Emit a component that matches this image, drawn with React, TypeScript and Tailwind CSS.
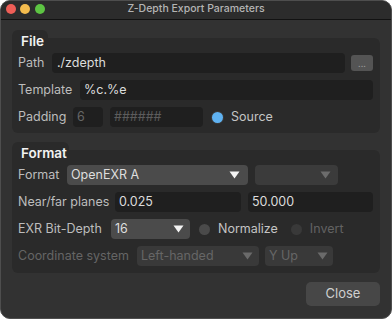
import React from "react";

const Arrow = ({ color }: { color: string }) => (
  <svg width="11" height="8" viewBox="0 0 11 8" className="shrink-0">
    <path d="M0.5 0.5 L10.5 0.5 L5.5 7.5 Z" fill={color} />
  </svg>
);

const Row = ({ children }: { children: React.ReactNode }) => (
  <div className="flex items-center h-[20px] gap-[6px] whitespace-nowrap [&>*]:shrink-0">{children}</div>
);

export default function App() {
  return (
    <div className="w-[392px] h-[319px] bg-white font-['Inter',sans-serif] text-[12.5px]">
      <div className="h-full rounded-[10px] border border-[#4e4e4e] bg-[#323232] overflow-hidden flex flex-col">
        {/* title bar */}
        <div className="h-[19px] shrink-0 bg-[#2c2c2c] border-b border-[#121212] flex items-start">
          <div className="flex gap-[4.5px] pl-[4.5px] pt-[3px] w-[60px]">
            <div className="size-[10px] rounded-full bg-[#ee5e57]" />
            <div className="size-[10px] rounded-full bg-[#f4bc4e]" />
            <div className="size-[10px] rounded-full bg-[#5dc443]" />
          </div>
          <div className="flex-1 text-center text-[10.5px] leading-[16px] font-medium text-[#b4b4b4]">
            Z-Depth Export Parameters
          </div>
          <div className="w-[60px]" />
        </div>

        <div className="flex flex-col px-[11px] pt-[10px]">
          {/* File group */}
          <div className="flex flex-col">
            <div className="w-[36px] h-[8px] bg-[#2a2a2a] rounded-t-[6px]" />
            <div className="bg-[#2a2a2a] rounded-b-[6px] rounded-tr-[6px] px-[6px] pb-[6px] flex flex-col gap-[7px]">
              <div className="-mt-[5px] h-[16px] leading-[16px] text-[13.5px] font-semibold text-[#f2f2f2] pl-[3px] -mb-[3px]">
                File
              </div>
              <Row>
                <div className="w-[28px] text-[#bdbdbd]">Path</div>
                <div className="w-[293px] h-[20px] rounded-[4px] bg-[#1f1f1f] pl-[5px] leading-[20px] text-[#dcdcdc]">
                  ./zdepth
                </div>
                <div className="w-[22px] h-[16px] rounded-[3px] bg-[#545454] flex items-end justify-center pb-[3px] text-[#9a9a9a] text-[9px] leading-[8px]">
                  ...
                </div>
              </Row>
              <Row>
                <div className="w-[56px] text-[#bdbdbd]">Template</div>
                <div className="w-[293px] h-[20px] rounded-[4px] bg-[#1f1f1f] pl-[4px] leading-[20px] text-[#dcdcdc]">
                  %c.%e
                </div>
              </Row>
              <Row>
                <div className="w-[49px] text-[#bdbdbd]">Padding</div>
                <div className="w-[30px] h-[20px] rounded-[4px] bg-[#1f1f1f] pl-[4px] leading-[20px] text-[#666666]">
                  6
                </div>
                <div className="w-[93px] h-[20px] rounded-[4px] bg-[#1f1f1f] pl-[4px] leading-[20px] text-[#5c5c5c] ml-[1px]">
                  ######
                </div>
                <div className="size-[11px] rounded-full bg-[#5fb2f2] ml-[3px] ring-1 ring-[#3a3a3a]" />
                <div className="text-[#c4c4c4] ml-[2px]">Source</div>
              </Row>
            </div>
          </div>

          {/* Format group */}
          <div className="flex flex-col mt-[9px]">
            <div className="w-[57px] h-[8px] bg-[#2a2a2a] rounded-t-[6px]" />
            <div className="bg-[#2a2a2a] rounded-b-[6px] rounded-tr-[6px] px-[6px] pb-[7px] flex flex-col gap-[7px]">
              <div className="-mt-[5px] h-[16px] leading-[16px] text-[13.5px] font-semibold text-[#f2f2f2] pl-[3px] -mb-[3px]">
                Format
              </div>
              <Row>
                <div className="w-[43px] text-[#bdbdbd]">Format</div>
                <div className="w-[181px] h-[20px] rounded-[4px] bg-[#4b4b4b] pl-[4px] pr-[8px] flex items-center justify-between text-[#dedede]">
                  <span>OpenEXR A</span>
                  <Arrow color="#f4f4f4" />
                </div>
                <div className="w-[83px] h-[20px] rounded-[4px] bg-[#3b3b3b] pr-[7px] flex items-center justify-end ml-[1px]">
                  <Arrow color="#6c6c6c" />
                </div>
              </Row>
              <Row>
                <div className="w-[91px] text-[#bdbdbd]">Near/far planes</div>
                <div className="w-[126px] h-[20px] rounded-[4px] bg-[#1f1f1f] pl-[4px] leading-[20px] text-[#dcdcdc]">
                  0.025
                </div>
                <div className="w-[125px] h-[20px] rounded-[4px] bg-[#1f1f1f] pl-[4px] leading-[20px] text-[#dcdcdc] ml-[1px]">
                  50.000
                </div>
              </Row>
              <Row>
                <div className="w-[87px] text-[#bdbdbd]">EXR Bit-Depth</div>
                <div className="w-[79px] h-[20px] rounded-[4px] bg-[#4b4b4b] pl-[4px] pr-[6px] flex items-center justify-between text-[#dedede]">
                  <span>16</span>
                  <Arrow color="#f4f4f4" />
                </div>
                <div className="size-[11px] rounded-full bg-[#4a4a4a] ml-[3px]" />
                <div className="text-[#c4c4c4] ml-[2px]">Normalize</div>
                <div className="size-[11px] rounded-full bg-[#393939] ml-[7px]" />
                <div className="text-[#626262] ml-[2px]">Invert</div>
              </Row>
              <Row>
                <div className="w-[113px] text-[#656565]">Coordinate system</div>
                <div className="w-[122px] h-[20px] rounded-[4px] bg-[#393939] pl-[4px] pr-[6px] flex items-center justify-between text-[#666666]">
                  <span>Left-handed</span>
                  <Arrow color="#6a6a6a" />
                </div>
                <div className="w-[68px] h-[20px] rounded-[4px] bg-[#393939] pl-[4px] pr-[5px] flex items-center justify-between text-[#666666]">
                  <span>Y Up</span>
                  <Arrow color="#6a6a6a" />
                </div>
              </Row>
            </div>
          </div>

          <div className="flex justify-end mt-[9px]">
            <div className="w-[74px] h-[24px] rounded-[5px] bg-[#474747] flex items-center justify-center text-[#cfcfcf] text-[13px]">
              Close
            </div>
          </div>
        </div>
      </div>
    </div>
  );
}
